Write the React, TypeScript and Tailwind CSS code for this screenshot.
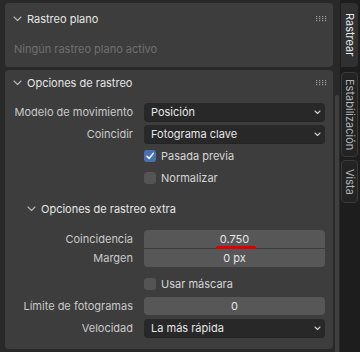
import React from "react";

const FONT = { fontFamily: "Inter, 'Noto Sans', sans-serif" };

function Chevron({ className = "" }: { className?: string }) {
  return (
    <svg width="9" height="6" viewBox="0 0 9 6" className={className}>
      <path d="M1 1 L4.5 4.5 L8 1" fill="none" stroke="#b8b8b8" strokeWidth="1.1" strokeLinecap="round" strokeLinejoin="round" />
    </svg>
  );
}

function SmallChevron() {
  return (
    <svg width="7" height="5" viewBox="0 0 7 5">
      <path d="M1 1 L3.5 3.5 L6 1" fill="none" stroke="#cfcfcf" strokeWidth="1.1" strokeLinecap="round" strokeLinejoin="round" />
    </svg>
  );
}

function Grip() {
  return (
    <svg width="11" height="6" viewBox="0 0 11 6">
      {[0, 1, 2, 3].map((c) =>
        [0, 1, 2].map((r) => (
          <rect key={`${c}-${r}`} x={c * 3} y={r * 2} width="1.2" height="1.2" fill="#9a9a9a" />
        ))
      )}
    </svg>
  );
}

function Header({ title }: { title: string }) {
  return (
    <div className="flex h-[26px] items-center pl-[8px] pr-[6px]">
      <Chevron />
      <span className="ml-[5px] text-[11px] text-[#e6e6e6]">{title}</span>
      <div className="flex-1" />
      <Grip />
    </div>
  );
}

function Label({ children }: { children: React.ReactNode }) {
  return <div className="w-[128px] shrink-0 text-right text-[11px] leading-none text-[#c9c9c9]">{children}</div>;
}

function Dropdown({ value }: { value: string }) {
  return (
    <div className="flex h-[18px] w-[181px] items-center justify-between rounded-[4px] bg-[#282828] pl-[7px] pr-[4px] shadow-[0_1px_0_#242424] text-[11px] text-[#e6e6e6]">
      <span>{value}</span>
      <SmallChevron />
    </div>
  );
}

function Row({ label, children }: { label: string; children: React.ReactNode }) {
  return (
    <div className="flex h-[18px] items-center gap-[11px]">
      <Label>{label}</Label>
      {children}
    </div>
  );
}

function Check({ checked, label }: { checked: boolean; label: string }) {
  return (
    <div className="flex h-[18px] items-center pl-[139px]">
      <div
        className={
          checked
            ? "flex h-[12px] w-[12px] items-center justify-center rounded-[3px] bg-[#4772b3]"
            : "h-[12px] w-[12px] rounded-[3px] bg-[#545454]"
        }
      >
        {checked && (
          <svg width="10" height="10" viewBox="0 0 10 10">
            <path d="M2 5.2 L4.2 7.4 L8.2 2.4" fill="none" stroke="#ffffff" strokeWidth="1.5" strokeLinecap="round" strokeLinejoin="round" />
          </svg>
        )}
      </div>
      <span className="ml-[5px] text-[11px] text-[#d6d6d6]">{label}</span>
    </div>
  );
}

function Tab({ label, active, h }: { label: string; active?: boolean; h: string }) {
  return (
    <div
      className={
        (active
          ? "flex items-center justify-center rounded-r-[4px] bg-[#303030] w-[17px] "
          : "flex items-center justify-center rounded-[4px] border border-[#3a3a3a] bg-[#232323] w-[17px] ") + h
      }
    >
      <span
        className={
          "[writing-mode:vertical-rl] text-[11px] leading-none " + (active ? "text-[#e8e8e8]" : "text-[#b4b4b4]")
        }
      >
        {label}
      </span>
    </div>
  );
}

export default function App() {
  return (
    <div className="flex h-[352px] w-[360px] overflow-hidden bg-[#1d1d1d]" style={FONT}>
      <div className="relative flex h-full w-[340px] flex-col bg-[#292929] pl-[5px] pr-[7px]">
        <div className="h-[2px] rounded-b-[4px] bg-[#3d3d3d]" />
        <div className="mt-[3px] rounded-[4px] bg-[#3d3d3d]">
          <div className="pt-[3px]">
            <Header title="Rastreo plano" />
          </div>
          <div className="flex h-[35px] items-center pl-[9px] text-[11px] text-[#6f6f6f]">
            Ningún rastreo plano activo
          </div>
        </div>
        <div className="mt-[3px] rounded-[4px] bg-[#3d3d3d] pb-[12px]">
          <Header title="Opciones de rastreo" />
          <div className="mt-[7px] flex flex-col gap-[4px]">
            <Row label="Modelo de movimiento">
              <Dropdown value="Posición" />
            </Row>
            <Row label="Coincidir">
              <Dropdown value="Fotograma clave" />
            </Row>
            <Check checked label="Pasada previa" />
            <Check checked={false} label="Normalizar" />
          </div>
          <div className="mt-[10px] flex h-[24px] items-center pl-[22px]">
            <Chevron />
            <span className="ml-[5px] text-[11px] text-[#e6e6e6]">Opciones de rastreo extra</span>
          </div>
          <div className="mt-[9px] flex flex-col">
            <Row label="Coincidencia">
              <div className="relative flex h-[18px] w-[181px] items-center justify-center rounded-t-[4px] bg-[#575757] text-[11px] text-[#e6e6e6]">
                0.750
                <div className="absolute left-[72px] top-[16px] z-10 h-[3px] w-[40px] rounded-full bg-[#e00000]" />
              </div>
            </Row>
            <div className="mt-[1px]">
              <Row label="Margen">
                <div className="flex h-[18px] w-[181px] items-center justify-center rounded-b-[4px] bg-[#575757] text-[11px] text-[#e6e6e6]">
                  0 px
                </div>
              </Row>
            </div>
          </div>
          <div className="mt-[8px] flex flex-col gap-[4px]">
            <Check checked={false} label="Usar máscara" />
            <Row label="Límite de fotogramas">
              <div className="flex h-[18px] w-[181px] items-center justify-center rounded-[4px] bg-[#575757] text-[11px] text-[#e6e6e6]">
                0
              </div>
            </Row>
            <Row label="Velocidad">
              <Dropdown value="La más rápida" />
            </Row>
          </div>
        </div>
        <div className="mt-[3px] h-[10px] rounded-t-[4px] bg-[#3d3d3d]" />
        <div className="absolute right-[1px] top-[95px] h-[260px] w-[4px] rounded-full bg-[#3f3f3f]" />
      </div>
      <div className="flex w-[20px] flex-col pt-[3px] pl-[1px]">
        <Tab label="Rastrear" active h="h-[64px]" />
        <div className="mt-[5px]">
          <Tab label="Estabilización" h="h-[85px]" />
        </div>
        <div className="mt-[3px]">
          <Tab label="Vista" h="h-[43px]" />
        </div>
      </div>
    </div>
  );
}
